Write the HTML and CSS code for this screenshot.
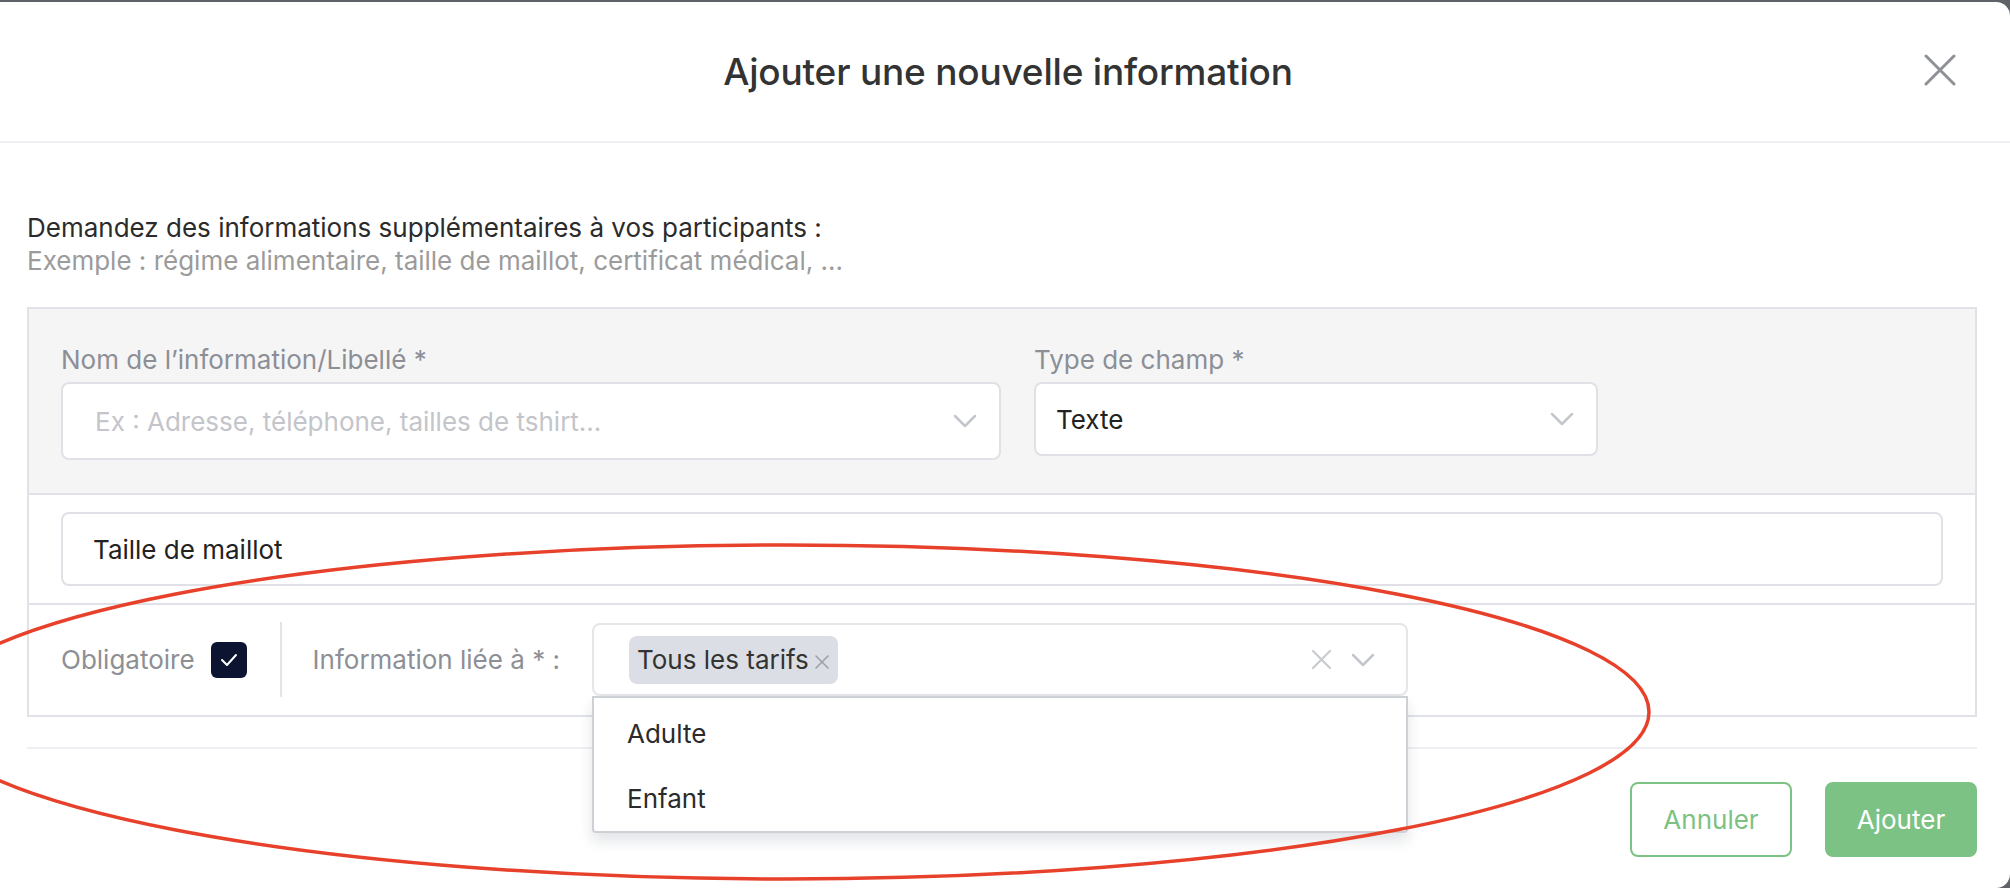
FILE: index.html
```html
<!DOCTYPE html>
<html lang="fr">
<head>
<meta charset="utf-8">
<title>Ajouter une nouvelle information</title>
<link rel="stylesheet" href="styles.css">
</head>
<body>
<div class="modal">
  <header class="modal-header">
    <h1 class="modal-title">Ajouter une nouvelle information</h1>
    <button class="close-btn" aria-label="Fermer">
      <svg width="32" height="32" viewBox="0 0 32 32"><path d="M2 2 L30 30 M30 2 L2 30" stroke="#8e9196" stroke-width="3" stroke-linecap="round" fill="none"/></svg>
    </button>
  </header>
  <div class="modal-body">
    <p class="intro">Demandez des informations supplémentaires à vos participants :</p>
    <p class="intro-sub">Exemple : régime alimentaire, taille de maillot, certificat médical, ...</p>

    <div class="panel">
      <div class="panel-top">
        <div class="field field-name">
          <label class="field-label">Nom de l’information/Libellé *</label>
          <div class="input input-tall">
            <span class="placeholder">Ex : Adresse, téléphone, tailles de tshirt...</span>
            <svg class="chev" width="24" height="14" viewBox="0 0 24 14"><path d="M2 2 L12 12 L22 2" stroke="#c3c6cc" stroke-width="2.5" fill="none" stroke-linecap="round" stroke-linejoin="round"/></svg>
          </div>
        </div>
        <div class="field field-type">
          <label class="field-label">Type de champ *</label>
          <div class="input">
            <span class="value">Texte</span>
            <svg class="chev" width="24" height="14" viewBox="0 0 24 14"><path d="M2 2 L12 12 L22 2" stroke="#c3c6cc" stroke-width="2.5" fill="none" stroke-linecap="round" stroke-linejoin="round"/></svg>
          </div>
        </div>
      </div>
      <div class="panel-row">
        <div class="input input-full"><span class="value">Taille de maillot</span></div>
      </div>
      <div class="panel-row panel-row-options">
        <span class="opt-label">Obligatoire</span>
        <span class="checkbox">
          <svg width="20" height="16" viewBox="0 0 20 16"><path d="M3 8 L8 13 L17 3" stroke="#fff" stroke-width="2" fill="none" stroke-linecap="round" stroke-linejoin="round"/></svg>
        </span>
        <span class="vdivider"></span>
        <span class="opt-label opt-linked">Information liée à * :</span>
        <div class="multi">
          <span class="tag">Tous les tarifs<svg class="tag-x" width="16" height="16" viewBox="0 0 16 16"><path d="M2 2 L14 14 M14 2 L2 14" stroke="#9ea1a6" stroke-width="1.6" fill="none" stroke-linecap="round"/></svg></span>
          <span class="multi-icons">
            <svg width="21" height="21" viewBox="0 0 21 21"><path d="M2 2 L19 19 M19 2 L2 19" stroke="#c8cbd0" stroke-width="2.2" fill="none" stroke-linecap="round"/></svg>
            <svg width="24" height="14" viewBox="0 0 24 14"><path d="M2 2 L12 12 L22 2" stroke="#c3c6cc" stroke-width="2.5" fill="none" stroke-linecap="round" stroke-linejoin="round"/></svg>
          </span>
          <ul class="dropdown">
            <li>Adulte</li>
            <li>Enfant</li>
          </ul>
        </div>
      </div>
    </div>

    <div class="footer">
      <button class="btn btn-outline">Annuler</button>
      <button class="btn btn-primary">Ajouter</button>
    </div>
  </div>
</div>
<svg class="annotation" width="2010" height="888" viewBox="0 0 2010 888">
  <ellipse cx="786" cy="712" rx="863" ry="167" fill="none" stroke="#e8412b" stroke-width="3.5"/>
</svg>
</body>
</html>
```
FILE: styles.css
```css
* { box-sizing: border-box; }
html, body { margin: 0; padding: 0; }
body {
  width: 2010px;
  height: 888px;
  overflow: hidden;
  background: #5f6267;
  font-family: Inter, "Liberation Sans", sans-serif;
  color: #2b2b2b;
  position: relative;
}
.modal {
  margin-top: 2px;
  height: 886px;
  background: #fff;
  border-top-right-radius: 14px;
  border-bottom-right-radius: 14px;
}
.modal-header {
  height: 141px;
  border-bottom: 2px solid #efeff3;
  display: flex;
  align-items: center;
  justify-content: center;
  position: relative;
}
.modal-title {
  margin: 0;
  font-size: 37px;
  font-weight: 500;
  color: #333;
  letter-spacing: -0.2px;
  margin-left: 6px;
}
.close-btn {
  position: absolute;
  right: 54px;
  top: 52px;
  width: 32px;
  height: 32px;
  border: 0;
  padding: 0;
  background: none;
  display: flex;
}
.modal-body {
  padding: 68px 33px 0 27px;
}
.intro, .intro-sub {
  margin: 0;
  font-size: 26px;
  line-height: 33px;
}
.intro { color: #2b2b2b; }
.intro-sub { color: #9b9b9b; }

.panel {
  margin-top: 30px;
  border: 2px solid #e0e2e7;
}
.panel-top {
  background: #f5f5f5;
  padding: 35px 34px 33px 32px;
  display: flex;
  gap: 33px;
  align-items: flex-start;
}
.field { display: flex; flex-direction: column; gap: 6px; }
.field-name { width: 940px; }
.field-type { width: 564px; }
.field-label {
  font-size: 26px;
  line-height: 32px;
  color: #8c8f95;
}
.input {
  height: 74px;
  background: #fff;
  border: 2px solid #dfe1e6;
  border-radius: 8px;
  display: flex;
  align-items: center;
  justify-content: space-between;
  padding: 0 22px 0 20px;
}
.input-tall { height: 78px; padding-left: 32px; }
.placeholder { font-size: 26px; color: #c3c5ca; }
.value { font-size: 26px; color: #222; }
.chev { display: block; }

.panel-row {
  border-top: 2px solid #e0e2e7;
  padding: 17px 32px;
}
.input-full { padding-left: 30px; }
.panel-row-options {
  display: flex;
  align-items: center;
  padding: 17px 32px 18px 32px;
}
.opt-label {
  font-size: 26px;
  color: #8c8f95;
}
.checkbox {
  width: 36px;
  height: 36px;
  border-radius: 6px;
  background: #0c1431;
  display: flex;
  align-items: center;
  justify-content: center;
  margin-left: 16px;
}
.vdivider {
  width: 2px;
  height: 75px;
  background: #e3e4e8;
  margin-left: 33px;
}
.opt-linked { margin-left: 31px; }
.multi {
  position: relative;
  margin-left: 32px;
  width: 816px;
  height: 73px;
  border: 2px solid #e4e6ea;
  border-radius: 8px;
  display: flex;
  align-items: center;
  justify-content: space-between;
  padding: 0 31px 0 35px;
}
.tag {
  height: 48px;
  background: #dcdee5;
  border-radius: 8px;
  display: flex;
  align-items: center;
  padding: 0 8px 0 8px;
  font-size: 26px;
  color: #333;
}
.tag-x {
  display: block;
  margin-left: 5px;
  margin-top: 4px;
}
.multi-icons {
  display: flex;
  align-items: center;
  gap: 19px;
}
.multi-icons svg { display: block; }
.dropdown {
  position: absolute;
  left: -2px;
  right: -2px;
  top: 71px;
  margin: 0;
  padding: 3px 0 0 0;
  list-style: none;
  background: #fff;
  border: 2px solid #cdd0d5;
  border-radius: 0 0 4px 4px;
  box-shadow: 0 8px 14px rgba(20, 30, 60, 0.12);
  z-index: 5;
}
.dropdown li {
  height: 65px;
  display: flex;
  align-items: center;
  padding-left: 33px;
  font-size: 26px;
  color: #2b2b2b;
}

.footer {
  margin-top: 30px;
  border-top: 2px solid #efeff3;
  padding-top: 33px;
  display: flex;
  justify-content: flex-end;
  gap: 33px;
}
.btn {
  height: 75px;
  border-radius: 8px;
  font-family: Inter, "Liberation Sans", sans-serif;
  font-size: 26px;
  padding: 0;
}
.btn-outline {
  width: 162px;
  background: #fff;
  border: 2px solid #7cc284;
  color: #7cc284;
}
.btn-primary {
  width: 152px;
  background: #7cc284;
  border: 2px solid #7cc284;
  color: #fff;
}
.annotation {
  position: absolute;
  left: 0;
  top: 0;
  pointer-events: none;
  z-index: 10;
}
```
